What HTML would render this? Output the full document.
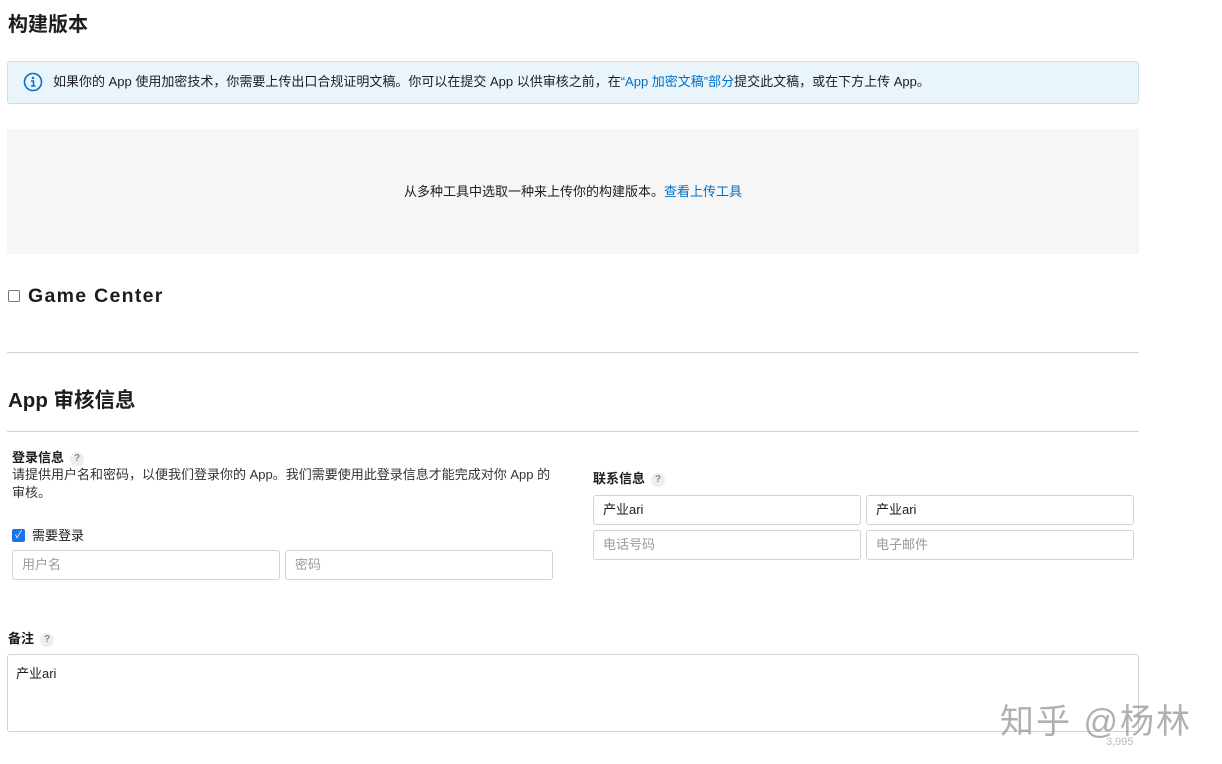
<!DOCTYPE html>
<html><head><meta charset="utf-8"><style>
*{box-sizing:border-box;margin:0;padding:0}
body{width:1222px;height:764px;background:#fff;font-family:"Liberation Sans","Noto Sans CJK SC",sans-serif;color:#1d1d1f;position:relative;overflow:hidden;font-size:13px}
.a{position:absolute}
h2{font-size:20px;font-weight:bold}
.inp{position:absolute;height:30px;border:1px solid #d2d2d7;border-radius:3px;padding:0 9px;line-height:28px;font-size:13px;background:#fff}
.ph{color:#9a9a9f}
.q{display:inline-block;width:14px;height:14px;border-radius:7px;background:#eee;color:#888;font-size:10px;text-align:center;line-height:14px;margin-left:6px;vertical-align:1px}
a{color:#0070c9;text-decoration:none}
</style></head><body>
<h2 class="a" style="left:8px;top:8px">构建版本</h2>
<div class="a" style="left:7px;top:61px;width:1132px;height:43px;background:#eaf4fb;border:1px solid #c9dff0;border-radius:3px"></div>
<svg class="a" style="left:23px;top:72px" width="20" height="20" viewBox="0 0 20 20"><circle cx="10" cy="10" r="8.5" fill="none" stroke="#0070c9" stroke-width="1.6"/><circle cx="10" cy="6" r="1.2" fill="#0070c9"/><path d="M8 9h2.5v5M8 14h4.5" stroke="#0070c9" stroke-width="1.5" fill="none"/></svg>
<div class="a" style="left:53px;top:71px;font-size:13px">如果你的 App 使用加密技术，你需要上传出口合规证明文稿。你可以在提交 App 以供审核之前，在<a>“App 加密文稿”部分</a>提交此文稿，或在下方上传 App。</div>
<div class="a" style="left:7px;top:129px;width:1132px;height:125px;background:#f6f6f7"></div>
<div class="a" style="left:0;width:1146px;top:181px;text-align:center">从多种工具中选取一种来上传你的构建版本。<a>查看上传工具</a></div>
<div class="a" style="left:8px;top:290px;width:12px;height:12px;border:1px solid #777;border-radius:2px"></div>
<div class="a" style="left:28px;top:285px;font-size:19.5px;font-weight:bold;letter-spacing:1.3px">Game Center</div>
<div class="a" style="left:7px;top:352px;width:1132px;height:1px;background:#d2d2d7"></div>
<h2 class="a" style="left:8px;top:383px;font-size:20.5px">App 审核信息</h2>
<div class="a" style="left:7px;top:431px;width:1132px;height:1px;background:#d2d2d7"></div>
<div class="a" style="left:12px;top:447px;font-weight:bold">登录信息<span class="q">?</span></div>
<div class="a" style="left:12px;top:466px;width:545px;line-height:18px;color:#333">请提供用户名和密码，以便我们登录你的 App。我们需要使用此登录信息才能完成对你 App 的审核。</div>
<div class="a" style="left:12px;top:529px;width:13px;height:13px;background:#1a73e8;border-radius:2px;color:#fff;font-size:10px;text-align:center;line-height:13px">✓</div>
<div class="a" style="left:32px;top:525px">需要登录</div>
<div class="inp ph" style="left:12px;top:550px;width:268px">用户名</div>
<div class="inp ph" style="left:285px;top:550px;width:268px">密码</div>
<div class="a" style="left:593px;top:468px;font-weight:bold">联系信息<span class="q">?</span></div>
<div class="inp" style="left:593px;top:495px;width:268px">产业ari</div>
<div class="inp" style="left:866px;top:495px;width:268px">产业ari</div>
<div class="inp ph" style="left:593px;top:530px;width:268px">电话号码</div>
<div class="inp ph" style="left:866px;top:530px;width:268px">电子邮件</div>
<div class="a" style="left:8px;top:628px;font-weight:bold">备注<span class="q">?</span></div>
<div class="a" style="left:7px;top:654px;width:1132px;height:78px;border:1px solid #d2d2d7;border-radius:3px;padding:8px 8px">产业ari</div>
<div class="a" style="left:1106px;top:736px;font-size:11px;color:#bbb">3,995</div>
<div class="a" style="left:1000px;top:694px;font-size:34px;color:rgba(150,150,150,.75);letter-spacing:2px">知乎 @杨林</div>
</body></html>
